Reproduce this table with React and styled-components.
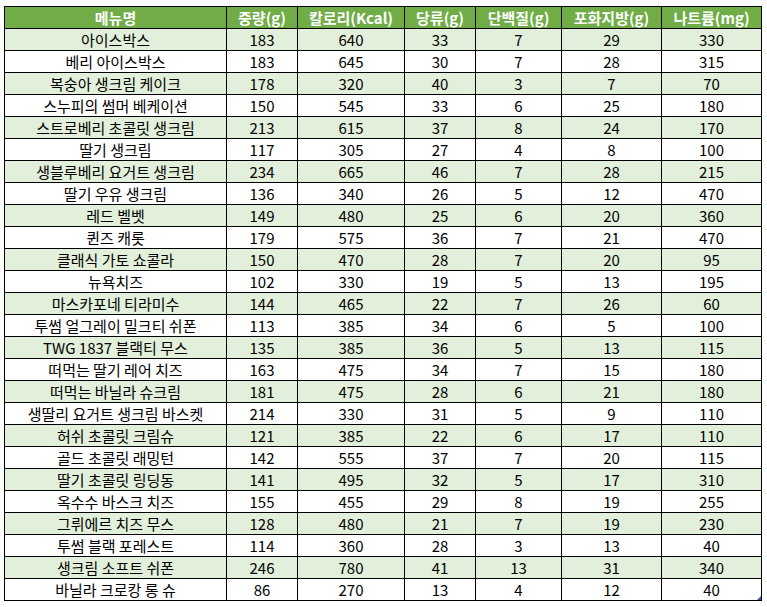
import React from "react";
import styled, { createGlobalStyle } from "styled-components";

const GlobalStyle = createGlobalStyle`
  body {
    margin: 0;
    background: #ffffff;
    font-family: "Noto Sans CJK KR", "Noto Sans", sans-serif;
  }
`;

const columns = [
  { label: "메뉴명", width: 222 },
  { label: "중량(g)", width: 71 },
  { label: "칼로리(Kcal)", width: 107 },
  { label: "당류(g)", width: 71 },
  { label: "단백질(g)", width: 86 },
  { label: "포화지방(g)", width: 100 },
  { label: "나트륨(mg)", width: 100 },
];

const rows = [
  ["아이스박스", 183, 640, 33, 7, 29, 330],
  ["베리 아이스박스", 183, 645, 30, 7, 28, 315],
  ["복숭아 생크림 케이크", 178, 320, 40, 3, 7, 70],
  ["스누피의 썸머 베케이션", 150, 545, 33, 6, 25, 180],
  ["스트로베리 초콜릿 생크림", 213, 615, 37, 8, 24, 170],
  ["딸기 생크림", 117, 305, 27, 4, 8, 100],
  ["생블루베리 요거트 생크림", 234, 665, 46, 7, 28, 215],
  ["딸기 우유 생크림", 136, 340, 26, 5, 12, 470],
  ["레드 벨벳", 149, 480, 25, 6, 20, 360],
  ["퀸즈 캐롯", 179, 575, 36, 7, 21, 470],
  ["클래식 가토 쇼콜라", 150, 470, 28, 7, 20, 95],
  ["뉴욕치즈", 102, 330, 19, 5, 13, 195],
  ["마스카포네 티라미수", 144, 465, 22, 7, 26, 60],
  ["투썸 얼그레이 밀크티 쉬폰", 113, 385, 34, 6, 5, 100],
  ["TWG 1837 블랙티 무스", 135, 385, 36, 5, 13, 115],
  ["떠먹는 딸기 레어 치즈", 163, 475, 34, 7, 15, 180],
  ["떠먹는 바닐라 슈크림", 181, 475, 28, 6, 21, 180],
  ["생딸리 요거트 생크림 바스켓", 214, 330, 31, 5, 9, 110],
  ["허쉬 초콜릿 크림슈", 121, 385, 22, 6, 17, 110],
  ["골드 초콜릿 래밍턴", 142, 555, 37, 7, 20, 115],
  ["딸기 초콜릿 링딩동", 141, 495, 32, 5, 17, 310],
  ["옥수수 바스크 치즈", 155, 455, 29, 8, 19, 255],
  ["그뤼에르 치즈 무스", 128, 480, 21, 7, 19, 230],
  ["투썸 블랙 포레스트", 114, 360, 28, 3, 13, 40],
  ["생크림 소프트 쉬폰", 246, 780, 41, 13, 31, 340],
  ["바닐라 크로캉 롱 슈", 86, 270, 13, 4, 12, 40],
];

export default function App() {
  return (
    <>
      <GlobalStyle />
      <Sheet>
        <TableWrap>
          <Table>
            <colgroup>
              {columns.map((c) => (
                <col key={c.label} style={{ width: c.width }} />
              ))}
            </colgroup>
            <thead>
              <tr>
                {columns.map((c) => (
                  <HeadCell key={c.label}>{c.label}</HeadCell>
                ))}
              </tr>
            </thead>
            <tbody>
              {rows.map((r, i) => (
                <Row key={r[0]} $striped={i % 2 === 0}>
                  {r.map((v, j) => (
                    <Cell key={j}>{v}</Cell>
                  ))}
                </Row>
              ))}
            </tbody>
          </Table>
          <ResizeHandle />
        </TableWrap>
      </Sheet>
    </>
  );
}

const Sheet = styled.div`
  padding: 6px 0 0 4px;
`;

const TableWrap = styled.div`
  position: relative;
  display: inline-block;
`;

const Table = styled.table`
  border-collapse: collapse;
  table-layout: fixed;
  width: 758px;
  font-size: 15px;
  color: #000000;
`;

const HeadCell = styled.th`
  background: #70ad47;
  color: #ffffff;
  font-weight: 700;
  text-align: center;
  border: 1px solid #000000;
  height: 21px;
  padding: 0;
  line-height: 20px;
  white-space: nowrap;
`;

const Row = styled.tr`
  background: ${(p) => (p.$striped ? "#e2efda" : "#ffffff")};
`;

const Cell = styled.td`
  text-align: center;
  border: 1px solid #000000;
  height: 21px;
  padding: 0;
  line-height: 20px;
  white-space: nowrap;
`;

const ResizeHandle = styled.div`
  position: absolute;
  right: 1px;
  bottom: 1px;
  width: 0;
  height: 0;
  border-left: 4px solid transparent;
  border-bottom: 4px solid #3f51b5;
`;
